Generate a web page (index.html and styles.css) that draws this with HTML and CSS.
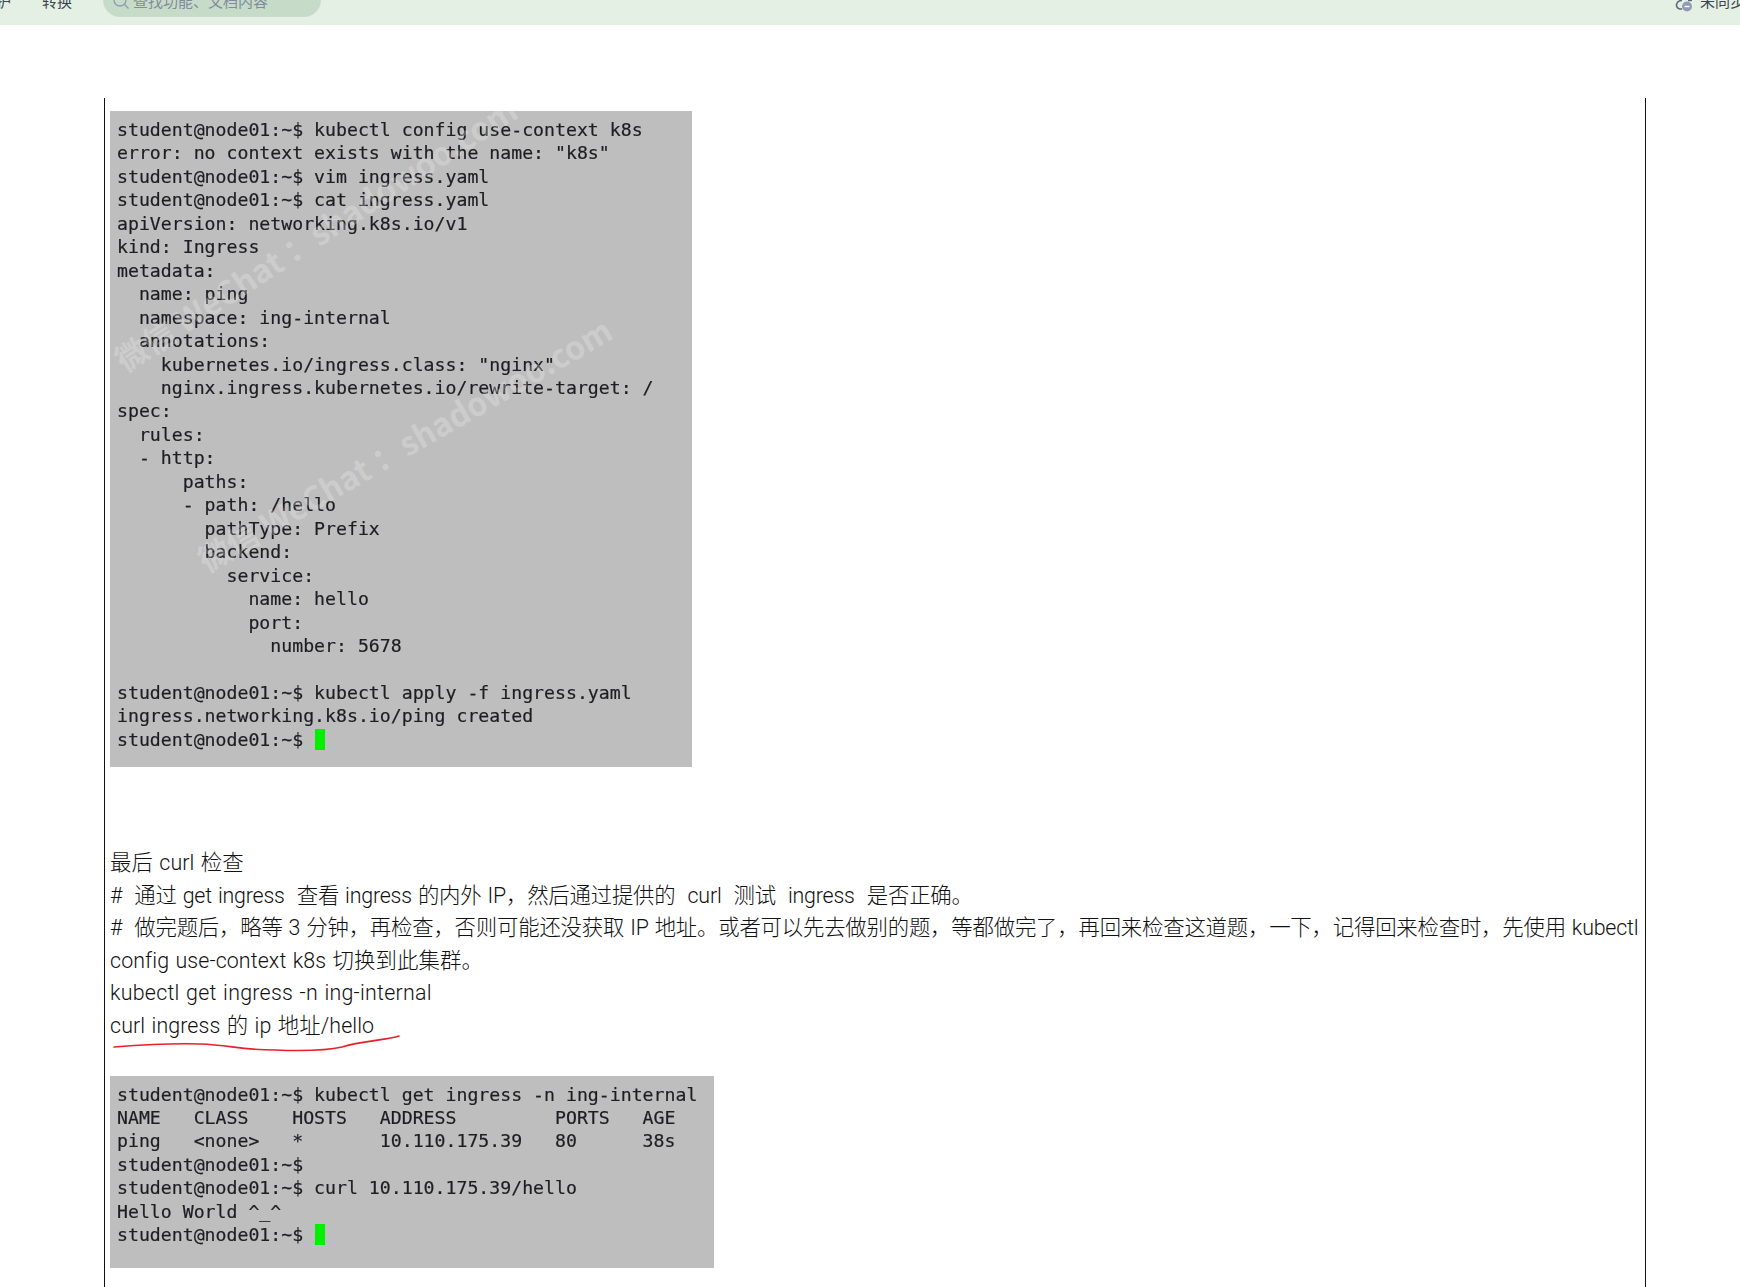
FILE: index.html
```html
<!DOCTYPE html>
<html lang="zh-CN">
<head>
<meta charset="utf-8">
<title>Ingress</title>
<link rel="stylesheet" href="styles.css">
</head>
<body>
<header class="toolbar">
  <span class="tab tab-first">护</span>
  <span class="tab tab-convert">转换</span>
  <div class="search">
    <svg class="search-icon" width="18" height="18" viewBox="0 0 18 18"><circle cx="8" cy="6" r="6" fill="none" stroke="#8d9db0" stroke-width="1.3"/><path d="M12.5 10.5l4 4" stroke="#8d9db0" stroke-width="1.3" fill="none"/></svg>
    <span>查找功能、文档内容</span>
  </div>
  <div class="sync">
    <svg width="20" height="12" viewBox="0 0 20 12"><path d="M9 0.5a5.5 5.5 0 0 0-5.5 4 4 4 0 0 0 3.5 4.5h2" fill="none" stroke="#5d6675" stroke-width="1.6"/><path d="M15 0.5l4 0" stroke="#5d6675" stroke-width="1.4"/><circle cx="14" cy="6.5" r="5" fill="#8f9bb8"/><rect x="11.5" y="5.8" width="5" height="1.4" fill="#fff"/></svg>
    <span>未同步</span>
  </div>
</header>
<main class="doc">
<div class="term term-one">
<pre class="term-text">student@node01:~$ kubectl config use-context k8s
error: no context exists with the name: "k8s"
student@node01:~$ vim ingress.yaml
student@node01:~$ cat ingress.yaml
apiVersion: networking.k8s.io/v1
kind: Ingress
metadata:
  name: ping
  namespace: ing-internal
  annotations:
    kubernetes.io/ingress.class: "nginx"
    nginx.ingress.kubernetes.io/rewrite-target: /
spec:
  rules:
  - http:
      paths:
      - path: /hello
        pathType: Prefix
        backend:
          service:
            name: hello
            port:
              number: 5678

student@node01:~$ kubectl apply -f ingress.yaml
ingress.networking.k8s.io/ping created
student@node01:~$ <span class="cursor"></span></pre>
<span class="mark mark-a">微信 WeChat ：shadowoo.com</span>
<span class="mark mark-b">微信 WeChat ：shadowoo.com</span>
</div>
<div class="prose">
<p class="loose">最后 curl 检查</p>
<p>#&nbsp; 通过 get ingress &nbsp;查看 ingress 的内外 IP，然后通过提供的 &nbsp;curl &nbsp;测试 &nbsp;ingress &nbsp;是否正确。</p>
<p>#&nbsp; 做完题后，略等 3 分钟，再检查，否则可能还没获取 IP 地址。或者可以先去做别的题，等都做完了，再回来检查这道题，一下，记得回来检查时，先使用 kubectl <span class="loose">config use-context k8s 切换到此集群。</span></p>
<p class="wide">kubectl get ingress -n ing-internal</p>
<p class="marked loose">curl ingress 的 ip 地址/hello
<svg class="scribble" width="300" height="24" viewBox="0 0 300 24"><path d="M4 19C30 17 60 15 90 16C120 17 130 22 165 22C190 23 215 23 232 19C250 13 278 12 289 8" fill="none" stroke="#e8202c" stroke-width="1.6" stroke-linecap="round"/></svg></p>
</div>
<div class="term term-two">
<pre class="term-text">student@node01:~$ kubectl get ingress -n ing-internal
NAME   CLASS    HOSTS   ADDRESS         PORTS   AGE
ping   &lt;none&gt;   *       10.110.175.39   80      38s
student@node01:~$
student@node01:~$ curl 10.110.175.39/hello
Hello World ^_^
student@node01:~$ <span class="cursor"></span></pre>
</div>
</main>
</body>
</html>
```
FILE: styles.css
```css
html, body {
  margin: 0;
  height: 1287px;
  overflow: hidden;
  background: #fff;
}
body {
  font-family: Roboto, "Noto Sans CJK SC", sans-serif;
  color: #111;
}
.toolbar {
  height: 25px;
  background: #e4f0e4;
  display: flex;
  align-items: flex-end;
  overflow: hidden;
  font-size: 15px;
  color: #3d4550;
  position: relative;
}
.tab {
  line-height: 20px;
  padding-bottom: 13px;
  flex: none;
}
.tab-first { margin-left: -4px; }
.tab-convert { margin-left: 31px; }
.search {
  margin-left: 31px;
  margin-bottom: 8px;
  width: 218px;
  height: 30px;
  flex: none;
  border-radius: 0 0 17px 17px;
  background: #c7dbc9;
  display: flex;
  align-items: flex-end;
  gap: 3px;
  padding-left: 9px;
  box-sizing: border-box;
  color: #7f8c9b;
}
.search-icon { margin-bottom: 5px; flex: none; }
.search span { line-height: 20px; padding-bottom: 5px; }
.sync {
  margin-left: auto;
  display: flex;
  align-items: flex-end;
  gap: 7px;
  padding-bottom: 13px;
  margin-right: -5px;
  flex: none;
}
.sync span { line-height: 20px; }
.doc {
  margin: 73px 0 0 104px;
  width: 1542px;
  height: 1189px;
  box-sizing: border-box;
  border-left: 1px solid #111;
  border-right: 1px solid #111;
  padding: 13px 5px 0;
  overflow: hidden;
}
.term {
  background: #bebebe;
  position: relative;
  overflow: hidden;
  box-sizing: border-box;
  padding: 7px 0 0 7px;
}
.term-one { width: 582px; height: 656px; }
.term-two { width: 604px; height: 192px; margin-top: 33px; }
.term-text {
  margin: 0;
  font-family: "DejaVu Sans Mono", "Liberation Mono", monospace;
  font-size: 18.2px;
  line-height: 23.45px;
  color: #1d1d22;
  -webkit-text-stroke: 0.2px #1d1d22;
  filter: blur(0.45px);
}
.cursor {
  display: inline-block;
  width: 10px;
  height: 21px;
  margin-left: 1px;
  background: #00f000;
  vertical-align: -4px;
}
.mark {
  position: absolute;
  font-family: "Noto Sans CJK SC", "Liberation Sans", sans-serif;
  font-weight: 700;
  font-size: 32px;
  line-height: 1;
  white-space: nowrap;
  color: rgba(240, 240, 240, 0.3);
  transform-origin: 0 100%;
  transform: rotate(-33deg);
}
.mark-a { left: 16px; top: 232px; }
.mark-b { left: 98px; top: 432px; transform: rotate(-30deg); }
.prose {
  margin-top: 80px;
  font-size: 21.4px;
  font-weight: 300;
  line-height: 32.6px;
  letter-spacing: -0.2px;
  word-spacing: 1px;
}
.prose p { margin: 0; }
.prose .loose { letter-spacing: 0.1px; }
.prose .wide { letter-spacing: 0.25px; }
.marked { position: relative; }
.scribble {
  position: absolute;
  left: 0;
  top: 18px;
}
```
